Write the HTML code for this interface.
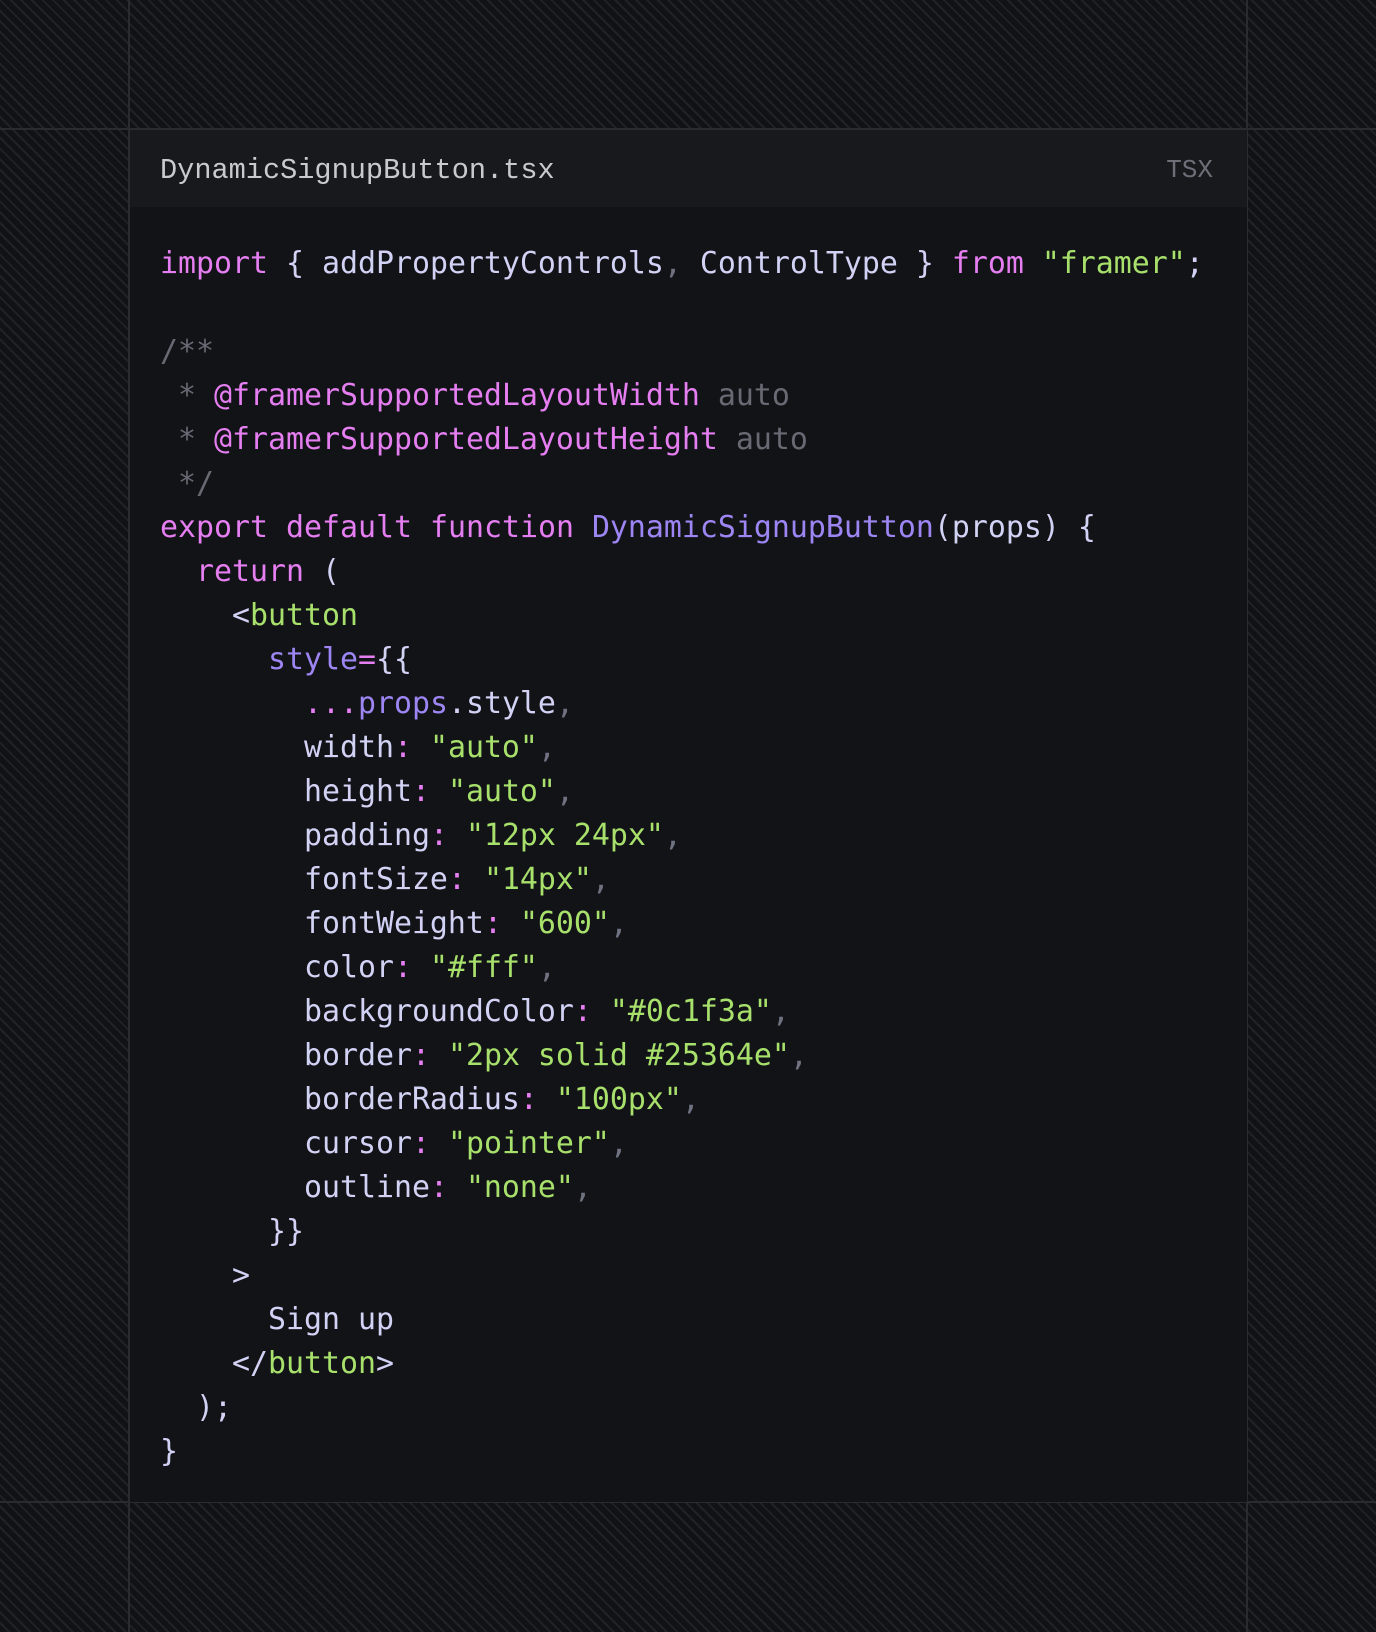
<!DOCTYPE html>
<html><head><meta charset="utf-8"><style>
html,body{margin:0;padding:0;}
body{width:1376px;height:1632px;position:relative;overflow:hidden;background:#111216;
background-image:repeating-linear-gradient(45deg,#111216 0 5.5px,#212228 5.5px 7.5px);}
.hl{position:absolute;left:0;width:1376px;height:2px;background:#2a2b30;}
.vl{position:absolute;top:0;height:1632px;width:2px;background:#2a2b30;}
.card{position:absolute;left:130px;top:130px;width:1117px;height:1372px;background:#121317;}
.head{position:absolute;left:0;top:0;width:100%;height:77px;background:#18191d;}
.fn{position:absolute;left:30px;top:21px;font:28.6px/40px "Liberation Mono",monospace;color:#c9cad0;}
.lang{position:absolute;right:34px;top:20px;font:26px/40px "Liberation Mono",monospace;color:#6c6f77;}
pre{position:absolute;left:30px;top:112px;margin:0;font:29.9px/44px "DejaVu Sans Mono",monospace;color:#d2d2f5;white-space:pre;}
.k{color:#e57ef0}.s{color:#a8e06c}.c{color:#676a73}.f{color:#9d86f4}.p{color:#6f7280}.t{color:#a8e06c}.pu{color:#e57ef0}
</style></head><body>
<div class="hl" style="top:128px"></div>
<div class="hl" style="top:1501px"></div>
<div class="vl" style="left:128px"></div>
<div class="vl" style="left:1246px"></div>
<div class="card">
<div class="head"><div class="fn">DynamicSignupButton.tsx</div><div class="lang">TSX</div></div>
<pre><span class="k">import</span> { addPropertyControls<span class="p">,</span> ControlType } <span class="k">from</span> <span class="s">"framer"</span>;

<span class="c">/**</span>
<span class="c"> *</span> <span class="k">@framerSupportedLayoutWidth</span> <span class="c">auto</span>
<span class="c"> *</span> <span class="k">@framerSupportedLayoutHeight</span> <span class="c">auto</span>
<span class="c"> */</span>
<span class="k">export</span> <span class="k">default</span> <span class="k">function</span> <span class="f">DynamicSignupButton</span>(props) {
  <span class="k">return</span> (
    &lt;<span class="t">button</span>
      <span class="f">style</span><span class="pu">=</span>{{
        <span class="pu">...</span><span class="f">props</span>.style<span class="p">,</span>
        width<span class="pu">:</span> <span class="s">"auto"</span><span class="p">,</span>
        height<span class="pu">:</span> <span class="s">"auto"</span><span class="p">,</span>
        padding<span class="pu">:</span> <span class="s">"12px 24px"</span><span class="p">,</span>
        fontSize<span class="pu">:</span> <span class="s">"14px"</span><span class="p">,</span>
        fontWeight<span class="pu">:</span> <span class="s">"600"</span><span class="p">,</span>
        color<span class="pu">:</span> <span class="s">"#fff"</span><span class="p">,</span>
        backgroundColor<span class="pu">:</span> <span class="s">"#0c1f3a"</span><span class="p">,</span>
        border<span class="pu">:</span> <span class="s">"2px solid #25364e"</span><span class="p">,</span>
        borderRadius<span class="pu">:</span> <span class="s">"100px"</span><span class="p">,</span>
        cursor<span class="pu">:</span> <span class="s">"pointer"</span><span class="p">,</span>
        outline<span class="pu">:</span> <span class="s">"none"</span><span class="p">,</span>
      }}
    &gt;
      Sign up
    &lt;/<span class="t">button</span>&gt;
  );
}</pre>
</div>
</body></html>
